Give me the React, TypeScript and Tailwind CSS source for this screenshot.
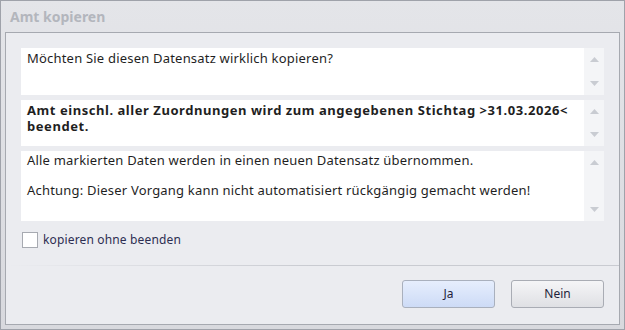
// Copy confirmation dialog

function ScrollBar() {
  return (
    <div className="flex w-[20px] flex-col items-center justify-between bg-[#f4f5f7] py-[9px]">
      <svg width="9" height="5" viewBox="0 0 9 5">
        <path d="M4.5 0 L9 5 L0 5 Z" fill="#c9ccd2" />
      </svg>
      <svg width="9" height="5" viewBox="0 0 9 5">
        <path d="M0 0 L9 0 L4.5 5 Z" fill="#c9ccd2" />
      </svg>
    </div>
  );
}

function TextBox({ height, children }: { height: string; children: React.ReactNode }) {
  return (
    <div className={`flex ${height} bg-white`}>
      <div className="flex-1 pl-[6px] pr-0 pt-[2px] text-[13px] leading-[15px] tracking-[0.2px] text-[#1f1f1f]">
        {children}
      </div>
      <ScrollBar />
    </div>
  );
}

export default function App() {
  return (
    <div
      className="flex h-[330px] w-[625px] flex-col border border-[#9fa2aa] bg-gradient-to-b from-[#e4e5e9] to-[#d8d9de]"
      style={{ fontFamily: '"Noto Sans", "Open Sans", sans-serif' }}
    >
      {/* Title bar */}
      <div className="flex h-[31px] items-center pl-[9px] text-[14px] font-bold text-[#b3b6bd]">
        Amt kopieren
      </div>

      {/* Content panel */}
      <div className="mx-[4px] mb-[4px] flex flex-1 flex-col border border-[#a6a9b0] bg-[#ebecf0] px-[15px] pt-[15px]">
        <div className="flex flex-col gap-[5px]">
          <TextBox height="h-[47px]">
            <p className="pt-[1px]">Möchten Sie diesen Datensatz wirklich kopieren?</p>
          </TextBox>
          <TextBox height="h-[46px]">
            <p className="font-bold leading-[16px] tracking-[0.55px]">
              Amt einschl. aller Zuordnungen wird zum angegebenen Stichtag &gt;31.03.2026&lt; beendet.
            </p>
          </TextBox>
          <TextBox height="h-[70px]">
            <p>Alle markierten Daten werden in einen neuen Datensatz übernommen.</p>
            <p className="mt-[15px]">Achtung: Dieser Vorgang kann nicht automatisiert rückgängig gemacht werden!</p>
          </TextBox>
        </div>

        {/* Checkbox */}
        <label className="mt-[10px] flex h-[18px] items-center gap-[5px] pl-[1px] text-[12px] tracking-[0.15px] text-[#2e2e52]">
          <span className="h-[16px] w-[16px] border border-[#a7aab1] bg-white" />
          kopieren ohne beenden
        </label>

        {/* Separator */}
        <div className="mt-[16px] h-px -mx-[15px] bg-gradient-to-r from-[#ebecf0] via-[#c9cbd1] to-[#c9cbd1]" />

        {/* Buttons */}
        <div className="mt-[14px] flex justify-end gap-[16px]">
          <button className="h-[28px] w-[93px] rounded-[3px] border border-[#a9b0bd] bg-gradient-to-b from-[#e6eefd] to-[#cddbf6] text-[12px] text-[#1f1f3a]">
            Ja
          </button>
          <button className="h-[28px] w-[93px] rounded-[3px] border border-[#a9acb4] bg-gradient-to-b from-[#f5f5f7] to-[#dfe0e4] text-[12px] text-[#1f1f3a]">
            Nein
          </button>
        </div>
      </div>
    </div>
  );
}
